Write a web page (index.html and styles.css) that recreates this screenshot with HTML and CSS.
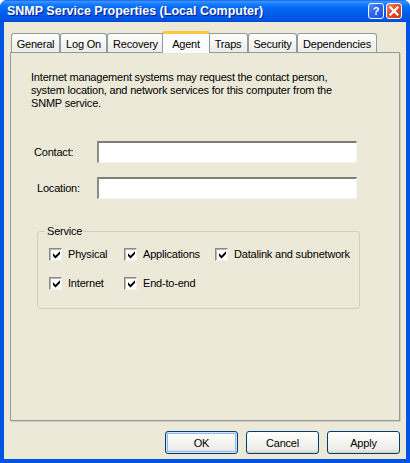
FILE: index.html
```html
<!DOCTYPE html>
<html>
<head>
<meta charset="utf-8">
<title>SNMP Service Properties</title>
<link rel="stylesheet" href="styles.css">
</head>
<body>
<div class="window">
  <div class="titlebar">
    <span class="title">SNMP Service Properties (Local Computer)</span>
    <div class="tbtns">
      <span class="tbtn help">?</span>
      <span class="tbtn close"><svg width="10" height="10" viewBox="0 0 10 10"><path d="M1.5 1.5 L8.5 8.5 M8.5 1.5 L1.5 8.5" stroke="#fff" stroke-width="2.2" stroke-linecap="square"/></svg></span>
    </div>
  </div>
  <div class="client">
    <div class="tabs">
      <span class="tab w-general">General</span>
      <span class="tab w-logon">Log On</span>
      <span class="tab w-recovery">Recovery</span>
      <span class="tab sel w-agent">Agent</span>
      <span class="tab w-traps">Traps</span>
      <span class="tab w-security">Security</span>
      <span class="tab w-deps">Dependencies</span>
    </div>
    <div class="panel">
      <p class="desc">Internet management systems may request the contact person,<br>system location, and network services for this computer from the<br>SNMP service.</p>
      <div class="field first">
        <label class="lbl lbl-contact">Contact:</label>
        <div class="input"></div>
      </div>
      <div class="field second">
        <label class="lbl lbl-location">Location:</label>
        <div class="input"></div>
      </div>
      <fieldset class="group">
        <legend>Service</legend>
        <div class="checks">
          <div class="chk"><span class="box"><svg width="9" height="9" viewBox="0 0 9 9"><path d="M1 3.3 L3.5 5.8 L8 1.3 L8 4 L3.5 8.5 L1 6 Z" fill="#000"/></svg></span>Physical</div>
          <div class="chk"><span class="box"><svg width="9" height="9" viewBox="0 0 9 9"><path d="M1 3.3 L3.5 5.8 L8 1.3 L8 4 L3.5 8.5 L1 6 Z" fill="#000"/></svg></span>Applications</div>
          <div class="chk"><span class="box"><svg width="9" height="9" viewBox="0 0 9 9"><path d="M1 3.3 L3.5 5.8 L8 1.3 L8 4 L3.5 8.5 L1 6 Z" fill="#000"/></svg></span>Datalink and subnetwork</div>
          <div class="chk"><span class="box"><svg width="9" height="9" viewBox="0 0 9 9"><path d="M1 3.3 L3.5 5.8 L8 1.3 L8 4 L3.5 8.5 L1 6 Z" fill="#000"/></svg></span>Internet</div>
          <div class="chk"><span class="box"><svg width="9" height="9" viewBox="0 0 9 9"><path d="M1 3.3 L3.5 5.8 L8 1.3 L8 4 L3.5 8.5 L1 6 Z" fill="#000"/></svg></span>End-to-end</div>
        </div>
      </fieldset>
    </div>
    <div class="buttons">
      <span class="btn default">OK</span>
      <span class="btn">Cancel</span>
      <span class="btn">Apply</span>
    </div>
  </div>
</div>
</body>
</html>
```
FILE: styles.css
```css
html, body {
  margin: 0;
  padding: 0;
  background: #ffffff;
}
body {
  font-family: "Liberation Sans", Arial, sans-serif;
  font-size: 11px;
  letter-spacing: -0.2px;
  color: #000;
}
.window {
  width: 410px;
  height: 463px;
  box-sizing: border-box;
  display: flex;
  flex-direction: column;
  border-radius: 7px 7px 0 0;
  overflow: hidden;
  background: #0054e3;
}
.titlebar {
  height: 22px;
  flex: none;
  display: flex;
  align-items: center;
  justify-content: space-between;
  padding: 0 8px 0 7px;
  background: linear-gradient(to bottom, #0a5ff3 0%, #3d93ff 7%, #2a89ff 12%, #137bff 20%, #046ef8 32%, #0263ee 50%, #0059e8 70%, #0056e5 88%, #0048d0 100%);
}
.title {
  color: #fff;
  font-weight: bold;
  font-size: 12.5px;
  letter-spacing: 0;
  text-shadow: 1px 1px 0 #0a1e8a;
  white-space: nowrap;
}
.tbtns {
  display: flex;
  gap: 2px;
  align-items: center;
}
.tbtn {
  width: 14px;
  height: 14px;
  border: 1px solid #fff;
  border-radius: 3px;
  display: flex;
  align-items: center;
  justify-content: center;
  color: #fff;
  font-weight: bold;
  font-size: 11px;
}
.help {
  background: linear-gradient(135deg, #5b8df8 0%, #2d66f0 45%, #1b52e2 100%);
}
.close {
  background: linear-gradient(135deg, #ee8a6a 0%, #e15630 40%, #c93a17 100%);
}
.client {
  flex: 1;
  background: #ece9d8;
  margin: 0 4px 4px 4px;
  padding: 9px 6px 0 6px;
  display: flex;
  flex-direction: column;
}
.tabs {
  display: flex;
  align-items: flex-end;
  height: 22px;
  margin-bottom: -1px;
  padding-left: 1px;
  position: relative;
  z-index: 1;
}
.tab {
  box-sizing: border-box;
  height: 19px;
  margin-bottom: 1px;
  border: 1px solid #919b9c;
  border-bottom: none;
  border-radius: 3px 3px 0 0;
  background: linear-gradient(to bottom, #ffffff 0%, #f7f7f4 40%, #ecebe6 100%);
  display: flex;
  align-items: center;
  justify-content: center;
  padding-top: 1px;
  white-space: nowrap;
}
.tab.sel {
  height: 22px;
  margin: 0 -2px;
  background: #fcfcfe;
  border-top: 3px solid #ffc83c;
  position: relative;
  z-index: 2;
  padding-top: 0;
}
.w-general { width: 49px; }
.w-logon { width: 47px; }
.w-recovery { width: 57px; }
.w-agent { width: 48px; }
.w-traps { width: 40px; }
.w-security { width: 49px; }
.w-deps { width: 80px; }
.panel {
  box-sizing: border-box;
  height: 369px;
  border: 1px solid #919b9c;
  box-shadow: 1px 1px 0 #d0cdbf;
  background: #ece9d8;
  padding: 18px 20px 0 20px;
}
.desc {
  margin: 0;
  line-height: 13px;
}
.field {
  display: flex;
  align-items: center;
}
.field.first { margin-top: 31px; }
.field.second { margin-top: 14px; }
.lbl {
  width: 66px;
  box-sizing: border-box;
}
.lbl-contact { padding-left: 3px; }
.lbl-location { padding-left: 6px; }
.input {
  width: 260px;
  height: 22px;
  box-sizing: border-box;
  background: #fff;
  border-top: 2px solid #7f7d77;
  border-left: 2px solid #8e8c85;
  border-bottom: 1px solid #f4f3ee;
  border-right: 1px solid #f4f3ee;
}
.group {
  margin: 26px 0 0 6px;
  width: 323px;
  box-sizing: border-box;
  border: 1px solid #d0d0bf;
  border-radius: 3px;
  padding: 8px 7px 17px 7px;
  min-inline-size: 0;
}
.group legend {
  padding: 0 2px;
  line-height: 13px;
}
.checks {
  display: grid;
  grid-template-columns: 75px 91px auto;
  row-gap: 13px;
  padding-left: 4px;
}
.chk {
  display: flex;
  align-items: center;
  height: 16px;
  white-space: nowrap;
}
.box {
  width: 13px;
  height: 13px;
  box-sizing: border-box;
  background: #fff;
  border-top: 1px solid #8a8a84;
  border-left: 1px solid #8a8a84;
  border-bottom: 1px solid #f2f1ec;
  border-right: 1px solid #f2f1ec;
  box-shadow: inset 1px 1px 0 #b9b7ae;
  display: flex;
  align-items: center;
  justify-content: center;
  margin-right: 6px;
}
.box svg { margin: 1px 0 0 1px; }
.buttons {
  display: flex;
  justify-content: flex-end;
  gap: 8px;
  margin-top: 10px;
}
.btn {
  width: 73px;
  height: 23px;
  box-sizing: border-box;
  border: 1px solid #003c74;
  border-radius: 3px;
  background: linear-gradient(to bottom, #ffffff 0%, #f6f6f3 40%, #ecebe6 85%, #d6d0c5 100%);
  display: flex;
  align-items: center;
  justify-content: center;
}
.btn.default {
  box-shadow: inset 0 0 0 1px #cee7ff, inset 0 0 0 2px #98b8ea;
}
```
